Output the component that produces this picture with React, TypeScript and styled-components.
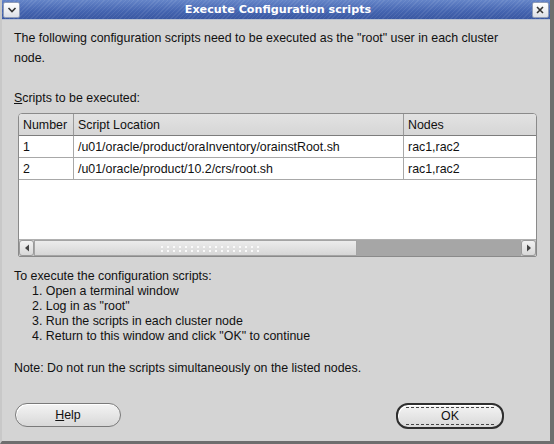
import React from "react";
import styled, { createGlobalStyle } from "styled-components";

const GlobalStyle = createGlobalStyle`
  html, body {
    margin: 0;
    padding: 0;
    background: #d4d4d4;
  }
`;

const scripts = [
  { number: "1", location: "/u01/oracle/product/oraInventory/orainstRoot.sh", nodes: "rac1,rac2" },
  { number: "2", location: "/u01/oracle/product/10.2/crs/root.sh", nodes: "rac1,rac2" },
];

const steps = [
  "Open a terminal window",
  'Log in as "root"',
  "Run the scripts in each cluster node",
  'Return to this window and click "OK" to continue',
];

const App: React.FC = () => {
  return (
    <>
      <GlobalStyle />
      <Window>
        <TitleBar>
          <TitleButton>
            <svg width="10" height="8" viewBox="0 0 10 8">
              <path d="M1.5 2 L5 5.5 L8.5 2" fill="none" stroke="#333" strokeWidth="1.6" />
            </svg>
          </TitleButton>
          <Title>Execute Configuration scripts</Title>
          <TitleButton>
            <svg width="8" height="8" viewBox="0 0 8 8">
              <path d="M1 1 L7 7 M7 1 L1 7" stroke="#333" strokeWidth="1.6" />
            </svg>
          </TitleButton>
        </TitleBar>
        <Body>
          <Intro>
            The following configuration scripts need to be executed as the "root" user in each cluster
            node.
          </Intro>
          <Label>
            <u>S</u>cripts to be executed:
          </Label>
          <TableFrame>
            <Grid>
              <HeadCell>Number</HeadCell>
              <HeadCell>Script Location</HeadCell>
              <HeadCell $last>Nodes</HeadCell>
              {scripts.map((s) => (
                <React.Fragment key={s.number}>
                  <Cell>{s.number}</Cell>
                  <Cell>{s.location}</Cell>
                  <Cell $last>{s.nodes}</Cell>
                </React.Fragment>
              ))}
            </Grid>
            <Filler />
            <ScrollBar>
              <ArrowButton>
                <svg width="6" height="8" viewBox="0 0 6 8">
                  <path d="M5 0.5 L1 4 L5 7.5 Z" fill="#444" />
                </svg>
              </ArrowButton>
              <Thumb>
                <Grip />
              </Thumb>
              <Track />
              <ArrowButton>
                <svg width="6" height="8" viewBox="0 0 6 8">
                  <path d="M1 0.5 L5 4 L1 7.5 Z" fill="#444" />
                </svg>
              </ArrowButton>
            </ScrollBar>
          </TableFrame>
          <Steps>
            <div>To execute the configuration scripts:</div>
            <StepList>
              {steps.map((step, i) => (
                <li key={i}>
                  {i + 1}. {step}
                </li>
              ))}
            </StepList>
          </Steps>
          <Note>Note: Do not run the scripts simultaneously on the listed nodes.</Note>
          <ButtonRow>
            <PillButton>
              <u>H</u>elp
            </PillButton>
            <PillButton $default>
              <Focus>OK</Focus>
            </PillButton>
          </ButtonRow>
        </Body>
      </Window>
    </>
  );
};

const Window = styled.div`
  width: 554px;
  height: 444px;
  box-sizing: border-box;
  background: #d4d4d4;
  border-left: 2px solid #c8c8c8;
  border-right: 4px solid #6e6e6e;
  border-bottom: 3px solid #6e6e6e;
  display: flex;
  flex-direction: column;
  font-family: "Liberation Sans", Arial, sans-serif;
  font-size: 12.4px;
  color: #111;
`;

const TitleBar = styled.div`
  height: 19px;
  display: flex;
  align-items: center;
  justify-content: space-between;
  padding: 0 1px;
  background:
    repeating-linear-gradient(135deg, rgba(255, 255, 255, 0.08) 0 1px, transparent 1px 3px),
    linear-gradient(#6585c8, #4464b0 60%, #3a58a2);
  border-bottom: 1px solid #b8c0d0;
`;

const Title = styled.div`
  color: #fff;
  font-family: "DejaVu Sans", sans-serif;
  font-weight: bold;
  font-size: 11.2px;
  margin-left: 4px;
`;

const TitleButton = styled.div`
  width: 17px;
  height: 16px;
  box-sizing: border-box;
  background: linear-gradient(#ffffff, #dcdfe6);
  border: 1px solid #8f9cb8;
  border-radius: 2px;
  display: flex;
  align-items: center;
  justify-content: center;
`;

const Body = styled.div`
  flex: 1;
  display: flex;
  flex-direction: column;
  padding: 8px 14px 0 12px;
`;

const Intro = styled.p`
  margin: 0;
  line-height: 20px;
  width: 510px;
`;

const Label = styled.div`
  margin-top: 22px;
  line-height: 16px;
`;

const TableFrame = styled.div`
  margin: 7px 0 0 4px;
  width: 519px;
  height: 144px;
  box-sizing: border-box;
  border: 1px solid #8a8a8a;
  border-radius: 4px 4px 2px 2px;
  background: #fff;
  display: flex;
  flex-direction: column;
  overflow: hidden;
`;

const Grid = styled.div`
  display: grid;
  grid-template-columns: 55px 330px 1fr;
  grid-auto-rows: 22px;
`;

const HeadCell = styled.div<{ $last?: boolean }>`
  background: linear-gradient(#e2e2e2, #d6d6d6);
  border-right: ${(p) => (p.$last ? "none" : "1px solid #9a9a9a")};
  border-bottom: 1px solid #7c7c7c;
  padding: 0 4px;
  display: flex;
  align-items: center;
`;

const Cell = styled.div<{ $last?: boolean }>`
  border-right: ${(p) => (p.$last ? "none" : "1px solid #a8a8a8")};
  border-bottom: 1px solid #a8a8a8;
  padding: 0 4px;
  display: flex;
  align-items: center;
`;

const Filler = styled.div`
  flex: 1;
`;

const ScrollBar = styled.div`
  height: 16px;
  display: flex;
  background: #c8c8c8;
  border-top: 1px solid #b0b0b0;
`;

const ArrowButton = styled.div`
  width: 15px;
  display: flex;
  align-items: center;
  justify-content: center;
  background: linear-gradient(#f2f2f2, #d8d8d8);
  border: 1px solid #9a9a9a;
  box-sizing: border-box;
  border-radius: 3px;
`;

const Thumb = styled.div`
  width: 323px;
  box-sizing: border-box;
  background: linear-gradient(#ececec, #d6d6d6);
  border: 1px solid #a4a4a4;
  display: flex;
  align-items: center;
  justify-content: center;
  padding-left: 30px;
`;

const Grip = styled.div`
  width: 104px;
  height: 7px;
  background-image: radial-gradient(circle, #fafafa 0.9px, transparent 1.1px);
  background-size: 6px 4px;
`;

const Track = styled.div`
  flex: 1;
  background: #a6a6a6;
`;

const Steps = styled.div`
  margin-top: 12px;
  line-height: 15px;
`;

const StepList = styled.ol`
  list-style: none;
  margin: 0;
  padding-left: 18px;
`;

const Note = styled.div`
  margin-top: 17px;
  line-height: 15px;
`;

const ButtonRow = styled.div`
  margin-top: 27px;
  display: flex;
  justify-content: space-between;
  padding: 0 32px 0 1px;
`;

const PillButton = styled.div<{ $default?: boolean }>`
  width: ${(p) => (p.$default ? "108px" : "106px")};
  height: ${(p) => (p.$default ? "26px" : "24px")};
  box-sizing: border-box;
  border: ${(p) => (p.$default ? "2px solid #2e2e2e" : "1px solid #7a7a7a")};
  border-radius: 12px;
  background: linear-gradient(#f4f4f4, #d8d8d8);
  box-shadow: inset 1px 1px 0 #ffffff;
  display: flex;
  align-items: center;
  justify-content: center;
  padding: 2px;
`;

const Focus = styled.span`
  flex: 1;
  align-self: stretch;
  display: flex;
  align-items: center;
  justify-content: center;
  border-top: 1px dashed #444;
  border-bottom: 1px dashed #444;
  margin: 0 6px;
`;

export default App;
